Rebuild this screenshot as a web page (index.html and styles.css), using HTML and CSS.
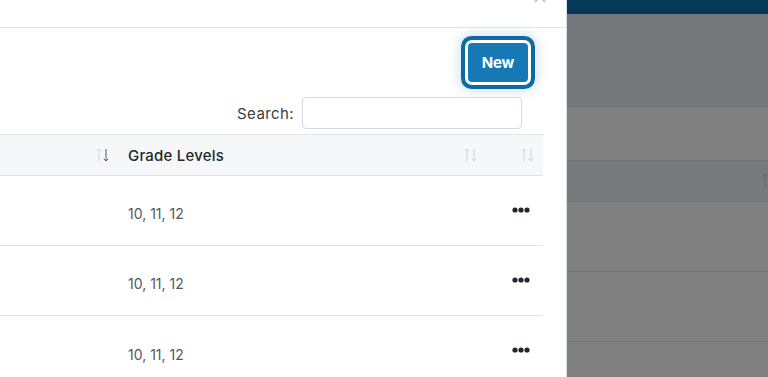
FILE: index.html
```html
<!DOCTYPE html>
<html lang="en">
<head>
<meta charset="utf-8">
<link rel="stylesheet" href="styles.css">
<title>Courses</title>
</head>
<body>
<div class="modal">
  <div class="modal-header">
    <button class="close" aria-label="Close">
      <svg width="12" height="12" viewBox="0 0 12 12"><path d="M1 1 L11 11 M11 1 L1 11" stroke="#b8bcc0" stroke-width="1.6" fill="none"/></svg>
    </button>
  </div>
  <div class="modal-body">
    <div class="toolbar">
      <button class="btn-new">New</button>
    </div>
    <div class="search-row">
      <label class="search-label" for="q">Search:</label>
      <input id="q" class="search-input" type="search">
    </div>
    <div class="table">
      <div class="tr thead">
        <div class="cell c1"><svg class="sort" width="13" height="14" viewBox="0 0 13 14"><path d="M3 1V13 M0.8 3.2 3 1 5.2 3.2" stroke="#d3d7db" fill="none"/><path d="M10 1V13 M7.8 10.8 10 13 12.2 10.8" stroke="#2f5f9e" fill="none"/></svg></div>
        <div class="cell c2"><span class="th-text">Grade Levels</span><svg class="sort" width="13" height="14" viewBox="0 0 13 14"><path d="M3 1V13 M0.8 3.2 3 1 5.2 3.2 M10 1V13 M7.8 10.8 10 13 12.2 10.8" stroke="#cfd3d7" fill="none"/></svg></div>
        <div class="cell c3"><svg class="sort" width="13" height="14" viewBox="0 0 13 14"><path d="M3 1V13 M0.8 3.2 3 1 5.2 3.2 M10 1V13 M7.8 10.8 10 13 12.2 10.8" stroke="#cfd3d7" fill="none"/></svg></div>
      </div>
      <div class="tr">
        <div class="cell c1"></div>
        <div class="cell c2 td-text">10, 11, 12</div>
        <div class="cell c3"><svg class="dots" width="18" height="6" viewBox="0 0 18 6"><circle cx="3" cy="3" r="2.6"/><circle cx="9" cy="3" r="2.6"/><circle cx="15" cy="3" r="2.6"/></svg></div>
      </div>
      <div class="tr">
        <div class="cell c1"></div>
        <div class="cell c2 td-text">10, 11, 12</div>
        <div class="cell c3"><svg class="dots" width="18" height="6" viewBox="0 0 18 6"><circle cx="3" cy="3" r="2.6"/><circle cx="9" cy="3" r="2.6"/><circle cx="15" cy="3" r="2.6"/></svg></div>
      </div>
      <div class="tr">
        <div class="cell c1"></div>
        <div class="cell c2 td-text">10, 11, 12</div>
        <div class="cell c3"><svg class="dots" width="18" height="6" viewBox="0 0 18 6"><circle cx="3" cy="3" r="2.6"/><circle cx="9" cy="3" r="2.6"/><circle cx="15" cy="3" r="2.6"/></svg></div>
      </div>
    </div>
  </div>
</div>
<div class="page">
  <div class="p-top"></div>
  <div class="p-band"></div>
  <div class="p-gap"></div>
  <div class="p-head"><svg class="p-arrow" width="6" height="16" viewBox="0 0 6 16"><path d="M3 1V15 M0.5 3.5 3 1 5.5 3.5" stroke="#66686b" fill="none"/></svg></div>
  <div class="p-row"></div>
  <div class="p-row"></div>
  <div class="p-row last"></div>
</div>
</body>
</html>
```

FILE: styles.css
```css
* { box-sizing: border-box; }
html, body { margin: 0; padding: 0; }
body {
  width: 768px;
  height: 377px;
  overflow: hidden;
  display: flex;
  font-family: Inter, "Open Sans", "Liberation Sans", sans-serif;
  background: #808080;
}

.modal {
  width: 567px;
  height: 377px;
  flex: none;
  background: #fff;
  border-right: 1px solid #d8dfe5;
  display: flex;
  flex-direction: column;
  overflow: hidden;
}
.modal-header {
  height: 28px;
  border-bottom: 1px solid #dde3e8;
  position: relative;
  flex: none;
}
.close {
  position: absolute;
  top: -9px;
  left: 534px;
  padding: 0;
  border: 0;
  background: none;
  line-height: 0;
}

.modal-body { display: flex; flex-direction: column; min-height: 0; overflow: hidden; flex: 1; }
.toolbar {
  display: flex;
  justify-content: flex-end;
  padding: 15px 38px 0 0;
  flex: none;
}
.btn-new {
  width: 60px;
  height: 39px;
  border: 0;
  border-radius: 4px;
  background: #1679b6;
  color: #fff;
  font-family: inherit;
  font-weight: 700;
  font-size: 15px;
  letter-spacing: -0.2px;
  box-shadow: 0 0 0 3px #fff, 0 0 0 7px #0f6aa3, 0 0 12px 9px rgba(40, 130, 190, 0.22);
}
.search-row {
  display: flex;
  justify-content: flex-end;
  align-items: center;
  gap: 8px;
  padding: 15px 44px 0 0;
  flex: none;
}
.search-label {
  font-size: 15px;
  letter-spacing: 0.4px;
  color: #3a3d40;
}
.search-input {
  width: 220px;
  height: 32px;
  border: 1px solid #d3dbe2;
  border-radius: 4px;
  background: #fff;
  outline: none;
}

.table {
  width: 543px;
  margin-top: 5px;
  flex: 1;
  min-height: 0;
  display: flex;
  flex-direction: column;
}
.tr {
  display: grid;
  grid-template-columns: 116px 1fr 60px;
  height: 70px;
  flex: none;
  border-bottom: 1px solid #dde3e8;
}
.tr:last-child { flex: 1; height: auto; min-height: 0; border-bottom: 0; align-items: start; }
.tr:last-child .cell { height: 70px; }
.thead {
  height: 42px;
  background: #f5f7f9;
  border-top: 1px solid #dde3e8;
}
.cell {
  display: flex;
  align-items: center;
}
.c1 { justify-content: flex-end; padding-right: 7px; }
.c2 { padding-left: 12px; justify-content: space-between; padding-right: 6px; }
.c3 { justify-content: flex-end; padding-right: 9px; }
.th-text {
  font-size: 15px;
  font-weight: 500;
  color: #24272b;
  letter-spacing: 0.2px;
}
.sort { display: block; }
.td-text {
  font-size: 14px;
  color: #55595e;
  padding-top: 6px;
}
.tr:not(.thead) .c3 { padding-right: 13px; padding-bottom: 2px; }
.dots { display: block; fill: #23262a; }

.page {
  flex: 1;
  height: 377px;
  overflow: hidden;
  display: flex;
  flex-direction: column;
  background: #808080;
}
.page > div { flex: none; }
.p-top { height: 14px; background: #063859; }
.p-band { height: 93px; background: #76777b; border-bottom: 1px solid #707175; }
.p-gap { height: 53px; background: #808080; }
.p-head {
  height: 42px;
  background: #78797d;
  border-top: 1px solid #727377;
  border-bottom: 1px solid #727377;
  display: flex;
  justify-content: flex-end;
  align-items: center;
}
.p-arrow { display: block; margin-right: 0; }
.p-row { height: 70px; border-bottom: 1px solid #747578; }
.page > .p-row.last { flex: 1; height: auto; min-height: 0; border-bottom: 0; }
```
